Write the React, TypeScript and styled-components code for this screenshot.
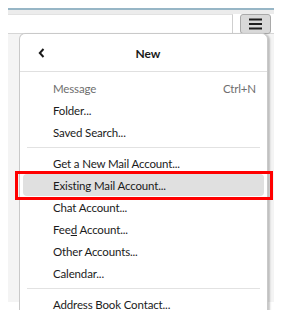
import React from 'react'
import styled, { createGlobalStyle } from 'styled-components'

const GlobalStyle = createGlobalStyle`
  body {
    margin: 0;
    background: #ffffff;
    font-family: Lato, "Open Sans", Arial, sans-serif;
  }
`

const Page = styled.div`
  height: 310px;
  padding: 8px 0 0 8px;
  box-sizing: border-box;
  overflow: hidden;
`

const Window = styled.div`
  position: relative;
  width: 266px;
  height: 292px;
  display: flex;
  flex-direction: column;
  border-top: 2px solid #97b6c6;
`

const TopBand = styled.div`
  height: 4px;
  background: #ececec;
`

const Toolbar = styled.div`
  height: 19px;
  display: flex;
  align-items: stretch;
  border-bottom: 1px solid #d6d6d6;
  background: #ffffff;
`

const SearchField = styled.div`
  width: 224px;
  border-top: 1px solid #e2e2e2;
  border-right: 1px solid #cfcfcf;
`

const MenuButton = styled.button`
  margin-left: 7px;
  width: 31px;
  height: 20px;
  padding: 0;
  display: flex;
  align-items: center;
  justify-content: center;
  background: #d9d9d9;
  border: 1px solid #a9a9a9;
  border-radius: 3px;
  box-sizing: border-box;
`

const Content = styled.div`
  flex: 1;
  background: #f4f4f4;
`

const Menu = styled.div`
  position: absolute;
  left: 11px;
  top: 23px;
  width: 249px;
  height: 290px;
  box-sizing: border-box;
  background: #ffffff;
  border: 1px solid #c9c9c9;
  border-bottom: none;
  border-radius: 6px 6px 0 0;
  box-shadow: 2px 1px 2px rgba(0, 0, 0, 0.22);
  display: flex;
  flex-direction: column;
`

const Header = styled.div`
  height: 37px;
  display: flex;
  align-items: center;
  padding-left: 18px;
  border-bottom: 1px solid #e0e0e0;
  position: relative;
`

const Title = styled.div`
  position: absolute;
  left: 0;
  right: 0;
  top: 12px;
  text-align: center;
  padding-left: 9px;
  font-size: 12px;
  font-weight: 700;
  color: #1a1a1a;
`

const Items = styled.div`
  padding-top: 5px;
  display: flex;
  flex-direction: column;
`

const Item = styled.div<{ $disabled?: boolean; $active?: boolean; $marked?: boolean }>`
  position: relative;
  height: 22px;
  margin: 0 3px;
  padding: 0 8px 0 30px;
  display: flex;
  align-items: center;
  justify-content: space-between;
  font-size: 11.5px;
  letter-spacing: -0.15px;
  color: ${(p) => (p.$disabled ? '#6e6e6e' : '#1b1b1b')};
  background: ${(p) => (p.$active ? '#e0e0e0' : 'transparent')};
  border-radius: 4px;
  white-space: nowrap;

  ${(p) =>
    p.$marked &&
    `
    &::after {
      content: '';
      position: absolute;
      left: -8px;
      right: -9px;
      top: -3px;
      bottom: -4px;
      border: 3px solid #ff0000;
    }
  `}
`

const Shortcut = styled.span`
  color: #6e6e6e;
`

const Separator = styled.div`
  height: 1px;
  margin: 4px 7px;
  background: #e2e2e2;
`

const Key = styled.span`
  text-decoration: underline;
`

const Hamburger = () => (
  <svg width="13" height="12" viewBox="0 0 13 12">
    <rect x="0" y="0.5" width="13" height="2" fill="#1e1e1e" />
    <rect x="0" y="5" width="13" height="2" fill="#1e1e1e" />
    <rect x="0" y="9.5" width="13" height="2" fill="#1e1e1e" />
  </svg>
)

const Back = () => (
  <svg width="7" height="10" viewBox="0 0 7 10">
    <polyline points="5.5,1 1.8,5 5.5,9" fill="none" stroke="#1a1a1a" strokeWidth="2" />
  </svg>
)

const App: React.FC = () => {
  return (
    <Page>
      <GlobalStyle />
      <Window>
        <TopBand />
        <Toolbar>
          <SearchField />
          <MenuButton>
            <Hamburger />
          </MenuButton>
        </Toolbar>
        <Content />
        <Menu>
          <Header>
            <Back />
            <Title>New</Title>
          </Header>
          <Items>
            <Item $disabled>
              <span>Message</span>
              <Shortcut>Ctrl+N</Shortcut>
            </Item>
            <Item>Folder...</Item>
            <Item>Saved Search...</Item>
            <Separator />
            <Item>Get a New Mail Account...</Item>
            <Item $active $marked>Existing Mail Account...</Item>
            <Item>Chat Account...</Item>
            <Item>
              <span>
                Fee<Key>d</Key> Account...
              </span>
            </Item>
            <Item>Other Accounts...</Item>
            <Item>Calendar...</Item>
            <Separator />
            <Item>Address Book Contact...</Item>
          </Items>
        </Menu>
      </Window>
    </Page>
  )
}

export default App
